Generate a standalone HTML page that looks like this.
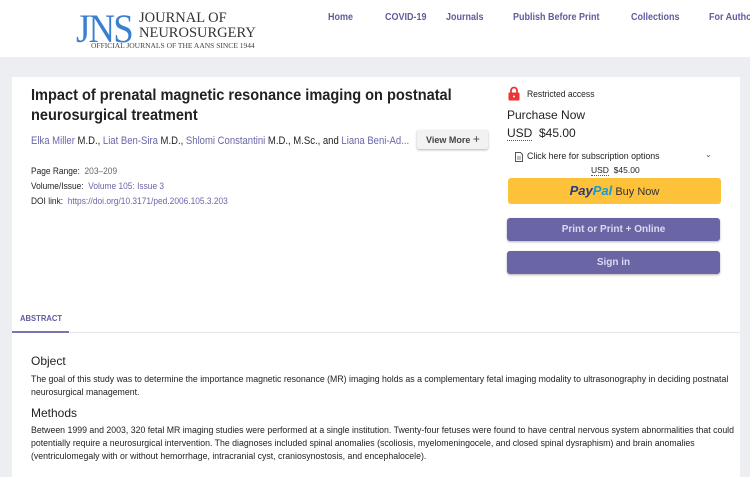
<!DOCTYPE html>
<html><head><meta charset="utf-8"><style>
*{margin:0;padding:0;box-sizing:border-box}
body{width:750px;height:469px;overflow:hidden;background:#eceef1;font-family:"Liberation Sans",sans-serif;color:#222;position:relative}
.a{position:absolute;white-space:nowrap;transform-origin:0 0}
.hdr{position:absolute;left:0;top:0;width:750px;height:57px;background:#fff}
.nav{font-weight:bold;font-size:10px;color:#5f5d9c;top:12px;transform:scaleX(.9)}
.card{position:absolute;left:12px;top:77px;width:728px;height:400px;background:#fff}
.lk{color:#6a66a8}
.btn{position:absolute;left:507px;width:213px;height:23px;background:#6a66a6;border-radius:3px;color:#dcdaf0;font-weight:bold;font-size:10px;text-align:center;line-height:23px;box-shadow:0 1px 2px rgba(0,0,0,.3)}
.p{font-size:9px;color:#222;line-height:13px;transform:scaleX(.972)}
</style></head><body>
<div class="hdr"></div>
<div class="a" style="left:76px;top:9px;font-family:'Liberation Serif',serif;font-size:40px;color:#3a7fd1;letter-spacing:-2px;line-height:40px;transform:scaleX(.92)">JNS</div>
<div class="a" style="left:139px;top:11px;font-family:'Liberation Serif',serif;font-size:14.5px;color:#333;line-height:15px">JOURNAL OF<br>NEUROSURGERY</div>
<div class="a" style="left:91px;top:41px;font-family:'Liberation Serif',serif;font-size:7.5px;color:#444">OFFICIAL JOURNALS OF THE AANS SINCE 1944</div>
<div class="a nav" style="left:328px">Home</div>
<div class="a nav" style="left:385px">COVID-19</div>
<div class="a nav" style="left:446px">Journals</div>
<div class="a nav" style="left:513px">Publish Before Print</div>
<div class="a nav" style="left:631px">Collections</div>
<div class="a nav" style="left:709px">For Authors</div>
<div class="card"></div>
<div class="a" style="left:31px;top:86px;font-size:16px;font-weight:bold;color:#222;line-height:20px;transform:scaleX(.91)">Impact of prenatal magnetic resonance imaging on postnatal<br>neurosurgical treatment</div>
<div class="a" style="left:31px;top:135px;font-size:11px;transform:scaleX(.865)"><span class="lk">Elka Miller</span> M.D., <span class="lk">Liat Ben-Sira</span> M.D., <span class="lk">Shlomi Constantini</span> M.D., M.Sc., and <span class="lk">Liana Beni-Ad...</span></div>
<div class="a" style="left:417px;top:130px;width:71px;height:19px;background:#f2f2f2;border-radius:2px;box-shadow:0 1px 2px rgba(0,0,0,.3);font-size:9px;font-weight:bold;color:#444;line-height:19px;padding-left:9px">View More <span style="font-size:12px;font-weight:normal">+</span></div>
<div class="a" style="left:31px;top:164px;font-size:9px;line-height:15px;transform:scaleX(.93)">Page Range:&nbsp; <span style="color:#666">203–209</span><br>Volume/Issue:&nbsp; <span class="lk">Volume 105: Issue 3</span><br>DOI link:&nbsp; <span class="lk">https://doi.org/10.3171/ped.2006.105.3.203</span></div>
<svg class="a" style="left:508px;top:86px" width="12" height="15" viewBox="0 0 12 15"><path d="M3 7V4.5a3 3 0 0 1 6 0V7" fill="none" stroke="#e33" stroke-width="1.8"/><rect x="0.5" y="6.5" width="11" height="8" rx="1" fill="#e33"/><circle cx="6" cy="10.5" r="1" fill="#fff"/></svg>
<div class="a" style="left:527px;top:89px;font-size:9.5px;transform:scaleX(.9)">Restricted access</div>
<div class="a" style="left:507px;top:108px;font-size:12px">Purchase Now</div>
<div class="a" style="left:507px;top:126px;font-size:12px"><span style="border-bottom:1px dotted #555">USD</span>&nbsp; $45.00</div>
<svg class="a" style="left:515px;top:152px" width="8" height="10" viewBox="0 0 8 10"><path d="M.5.5h5l2 2v7h-7z" fill="none" stroke="#555"/><path d="M2 5h4M2 7h4" stroke="#555" stroke-width=".8"/></svg>
<div class="a" style="left:527px;top:151px;font-size:9.5px;transform:scaleX(.93)">Click here for subscription options</div>
<div class="a" style="left:705px;top:150px;font-size:8px;color:#555">⌄</div>
<div class="a" style="left:591px;top:165px;font-size:8.5px"><span style="border-bottom:1px dotted #555">USD</span>&nbsp; $45.00</div>
<div class="a" style="left:508px;top:178px;width:213px;height:26px;background:#fec13a;border-radius:3px;text-align:center;line-height:26px;font-size:11px;color:#333"><span style="font-weight:bold;font-style:italic;font-size:13px;color:#253b80">Pay<span style="color:#179bd7">Pal</span></span> Buy Now</div>
<div class="btn" style="top:218px">Print or Print + Online</div>
<div class="btn" style="top:251px">Sign in</div>
<div class="a" style="left:20px;top:313px;font-size:8.5px;font-weight:bold;color:#5f5d9c;transform:scaleX(.9)">ABSTRACT</div>
<div class="a" style="left:12px;top:332px;width:728px;height:1px;background:#e6e6ea"></div>
<div class="a" style="left:12px;top:331px;width:57px;height:2px;background:#7875b0"></div>
<div class="a" style="left:31px;top:354px;font-size:12px">Object</div>
<div class="a p" style="left:31px;top:373px">The goal of this study was to determine the importance magnetic resonance (MR) imaging holds as a complementary fetal imaging modality to ultrasonography in deciding postnatal<br>neurosurgical management.</div>
<div class="a" style="left:31px;top:406px;font-size:12px">Methods</div>
<div class="a p" style="left:31px;top:424px">Between 1999 and 2003, 320 fetal MR imaging studies were performed at a single institution. Twenty-four fetuses were found to have central nervous system abnormalities that could<br>potentially require a neurosurgical intervention. The diagnoses included spinal anomalies (scoliosis, myelomeningocele, and closed spinal dysraphism) and brain anomalies<br>(ventriculomegaly with or without hemorrhage, intracranial cyst, craniosynostosis, and encephalocele).</div>
</body></html>
